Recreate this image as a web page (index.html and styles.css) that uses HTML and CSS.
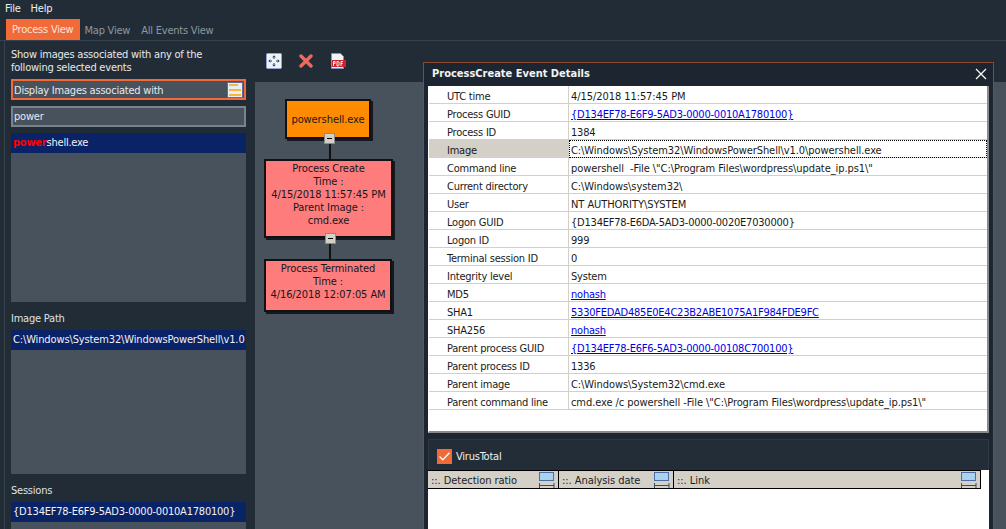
FILE: index.html
```html
<!DOCTYPE html>
<html lang="en">
<head>
<meta charset="utf-8">
<title>ProcessCreate Event Details</title>
<link rel="stylesheet" href="styles.css">
</head>
<body>
<div class="app">
  <nav class="menu"><span>File</span><span>Help</span></nav>
  <div class="tabs">
    <span class="tab active">Process View</span>
    <span class="tab map">Map View</span>
    <span class="tab">All Events View</span>
  </div>
  <main class="main">
    <aside class="side">
      <p class="intro">Show images associated with any of the<br>following selected events</p>
      <div class="select"><span>Display Images associated with</span>
        <svg class="select-icon" width="16" height="16" viewBox="0 0 16 16"><rect x=".5" y=".5" width="15" height="15" fill="#e8eef6" stroke="#5c6f9c"/><rect x="2" y="2" width="9" height="2" fill="#f6b93b"/><rect x="2" y="7" width="12" height="2" fill="#f6b93b"/><rect x="2" y="12" width="12" height="2" fill="#f6b93b"/></svg>
      </div>
      <div class="search">power</div>
      <div class="list first"><div class="row"><b class="hit">power</b>shell.exe</div></div>
      <h2 class="label">Image Path</h2>
      <div class="list second"><div class="row path-tight">C:\Windows\System32\WindowsPowerShell\v1.0</div></div>
      <h2 class="label">Sessions</h2>
      <div class="list third"><div class="row">{D134EF78-E6F9-5AD3-0000-0010A1780100}</div></div>
    </aside>
    <section class="work">
      <div class="toolbar">
        <svg width="16" height="16" viewBox="0 0 16 16"><rect x=".5" y=".5" width="15" height="15" rx="1" fill="#eef3fa" stroke="#8fa6cf"/><path d="M8 3v3M6.700 4.300 8 2.800l1.300 1.500M8 13v-3M6.700 11.700 8 13.200l1.300-1.500M3 8h3M4.300 6.700 2.800 8l1.500 1.300M13 8h-3M11.700 6.700 13.200 8l-1.500 1.300" fill="none" stroke="#2d3a55" stroke-width="1"/></svg>
        <svg width="14" height="14" viewBox="0 0 14 14"><path d="M2 2l10 10M12 2 2 12" stroke="#ee6a5f" stroke-width="3.400" stroke-linecap="round"/></svg>
        <svg width="16" height="16" viewBox="0 0 16 16"><path d="M1.500.5h9l3 3v12h-12z" fill="#eef3fa" stroke="#7f93bd"/><rect x="2" y="7" width="14" height="7" fill="#c9252b"/><path d="M3.500 13V8.500h1.600v2H3.500M7 13V8.500h1q1.200 0 1.200 2.200T8 13zM11 13V8.500h2M11 10.500h1.600" fill="none" stroke="#fff" stroke-width=".9"/></svg>
      </div>
      <div class="canvas">
        <div class="edge edge-a"></div>
        <div class="edge edge-b"></div>
        <div class="node orange n1">powershell.exe</div>
        <div class="toggle t1"></div>
        <div class="node pink n2">Process Create<br>Time :<br>4/15/2018 11:57:45 PM<br>Parent Image :<br>cmd.exe</div>
        <div class="toggle t2"></div>
        <div class="node pink n3">Process Terminated<br>Time :<br>4/16/2018 12:07:05 AM</div>
      </div>
    </section>
  </main>

  <section class="modal">
    <header class="modal-head">
      <h1>ProcessCreate Event Details</h1>
      <svg width="12" height="12" viewBox="0 0 12 12"><path d="M1 1l10 10M11 1 1 11" stroke="#fff" stroke-width="1.200"/></svg>
    </header>
    <div class="details">
      <div class="k">UTC time</div><div class="v loose">4/15/2018 11:57:45 PM</div>
      <div class="k">Process GUID</div><div class="v"><a>{D134EF78-E6F9-5AD3-0000-0010A1780100}</a></div>
      <div class="k">Process ID</div><div class="v">1384</div>
      <div class="k sel">Image</div><div class="v focus loose">C:\Windows\System32\WindowsPowerShell\v1.0\powershell.exe</div>
      <div class="k">Command line</div><div class="v loose">powershell &nbsp;-File \"C:\Program Files\wordpress\update_ip.ps1\"</div>
      <div class="k">Current directory</div><div class="v loose">C:\Windows\system32\</div>
      <div class="k">User</div><div class="v loose">NT AUTHORITY\SYSTEM</div>
      <div class="k">Logon GUID</div><div class="v"><span>{D134EF78-E6DA-5AD3-0000-0020E7030000}</span></div>
      <div class="k">Logon ID</div><div class="v">999</div>
      <div class="k">Terminal session ID</div><div class="v">0</div>
      <div class="k">Integrity level</div><div class="v">System</div>
      <div class="k">MD5</div><div class="v"><a>nohash</a></div>
      <div class="k">SHA1</div><div class="v"><a>5330FEDAD485E0E4C23B2ABE1075A1F984FDE9FC</a></div>
      <div class="k">SHA256</div><div class="v"><a>nohash</a></div>
      <div class="k">Parent process GUID</div><div class="v"><a>{D134EF78-E6F6-5AD3-0000-00108C700100}</a></div>
      <div class="k">Parent process ID</div><div class="v">1336</div>
      <div class="k">Parent image</div><div class="v loose">C:\Windows\System32\cmd.exe</div>
      <div class="k">Parent command line</div><div class="v loose">cmd.exe /c powershell -File \"C:\Program Files\wordpress\update_ip.ps1\"</div>
    </div>
    <div class="vt">
      <div class="vt-head">
        <svg width="15" height="15" viewBox="0 0 15 15"><rect width="15" height="15" fill="#f26a38"/><path d="M2.500 7.500l3.300 3.300L12.500 3.800" fill="none" stroke="#fff" stroke-width="1.300"/></svg>
        <span>VirusTotal</span>
      </div>
      <div class="vt-table">
        <div class="cols">
          <div class="col c1">::. Detection ratio<svg class="fit" width="16" height="16" viewBox="0 0 16 16"><use href="#fit"/></svg></div>
          <div class="col c2">::. Analysis date<svg class="fit" width="16" height="16" viewBox="0 0 16 16"><use href="#fit"/></svg></div>
          <div class="col c3">::. Link<svg class="fit" width="16" height="16" viewBox="0 0 16 16"><use href="#fit"/></svg></div>
        </div>
      </div>
    </div>
  </section>
  <svg class="defs" width="0" height="0"><defs><g id="fit"><rect x=".5" y=".5" width="14" height="8" fill="#a9d2f0" stroke="#4a6fa5"/><path d="M.5 11v5M15 11v5M1 13.500h14" fill="none" stroke="#3d4a68"/></g></defs></svg>
</div>
</body>
</html>
```

FILE: styles.css
```css
* { box-sizing: border-box; }
html, body { margin: 0; height: 100%; overflow: hidden; }
body { background: #222c36; color: #e6e9ec; font: 11px/14px "DejaVu Sans Condensed", "Liberation Sans", sans-serif; letter-spacing: -0.22px; }
.app { position: relative; width: 1006px; height: 529px; overflow: hidden; }
.defs { position: absolute; }

.menu { display: flex; gap: 10px; height: 19px; padding: 2px 0 0 5px; color: #eef0f2; }
.tabs { display: flex; height: 22px; padding-left: 6px; border-bottom: 1px solid #36424d; }
.tab { padding: 5px 5px 0 5px; color: #8f989f; }
.tab.map { padding: 5px 6px 0 4px; }
.tab.active { background: #f26a38; color: #f3e6df; padding: 4px 7px 0 6px; height: 21px; }

.main { display: flex; height: 488px; }
.side { width: 251px; padding: 7px 9px 0 6px; margin-left: 4px; border-left: 1px solid #36424d; flex: none; }
.intro { margin: 0 0 4px; line-height: 13px; height: 27px; }
.select { display: flex; align-items: center; justify-content: space-between; height: 21px; padding: 0 1px; border: 2px solid #f26a38; background: #47525c; }
.select span { position: relative; top: 1px; }
.select-icon { flex: none; }
.search { height: 21px; margin-top: 6px; padding: 2px 0 0 1px; border: 2px solid #79838c; background: #47525c; }
.list { background: #47525c; }
.first { height: 169px; margin-top: 6px; }
.second { height: 144px; }
.third { height: 40px; }
.row { height: 20px; padding: 3px 0 0 2px; background: #0a2266; color: #f0f2f6; white-space: nowrap; overflow: hidden; }
.path-tight { letter-spacing: -0.13px; }
.hit { color: #f00; }
.label { margin: 9px 0 5px; height: 14px; padding-top: 1px; font: inherit; color: #dfe3e6; }

.work { flex: 1; display: flex; flex-direction: column; }
.toolbar { display: flex; align-items: center; gap: 17px; height: 41px; padding: 0 0 2px 11px; }
.canvas { position: relative; flex: 1; background: #47525c; }

.node { position: absolute; display: flex; align-items: center; justify-content: center; text-align: center; color: #14181c; border: 2px solid #101214; box-shadow: 2px 2px 0 #15191d; line-height: 13px; letter-spacing: -0.08px; }
.orange { left: 30px; top: 17px; width: 86px; height: 40px; background: #ff8c00; }
.pink { background: #ff7c7c; padding-bottom: 8px; }
.n2 { left: 9px; top: 77px; width: 129px; height: 79px; }
.n3 { left: 9px; top: 177px; width: 128px; height: 53px; }
.toggle { position: absolute; width: 11px; height: 11px; background: #d4d0c8; border: 1px solid #8b8b8b; z-index: 1; }
.toggle::after { content: ""; position: absolute; left: 2px; top: 4px; width: 5px; height: 1px; background: #000; }
.t1 { left: 69px; top: 51px; }
.t2 { left: 70px; top: 151px; }
.edge { position: absolute; width: 2px; background: #111; }
.edge-a { left: 74px; top: 58px; height: 20px; }
.edge-b { left: 74px; top: 158px; height: 20px; }

.modal { position: absolute; left: 423px; top: 62px; width: 571px; height: 467px; padding: 0 4px; border: 1px solid #8d4630; border-bottom: 0; background: #1d2630; }
.modal-head { display: flex; align-items: center; justify-content: space-between; height: 23px; padding: 0 2px 2px 4px; }
.modal-head h1 { margin: 0; font: bold 11px/14px "DejaVu Sans Condensed", "Liberation Sans", sans-serif; letter-spacing: 0; color: #f1f3f5; }
.details { display: grid; grid-template-columns: 140px 1fr; grid-auto-rows: 18px; width: 561px; height: 347px; background: #fff; border-right: 2px solid #8a8a8a; border-bottom: 2px solid #8a8a8a; border-left: 1px solid #fff; color: #1a1a1a; }
.k, .v { padding-top: 4px; line-height: 13px; border-bottom: 1px solid #d4d0c8; white-space: nowrap; }
.k { padding-left: 18px; border-right: 1px solid #d4d0c8; }
.v { padding-left: 2px; }
.v.loose { letter-spacing: -0.07px; }
.k.sel { background: #d4d0c8; }
.v.focus { outline: 1px dotted #000; outline-offset: -1px; }
a { color: #0000e6; text-decoration: underline; }
.vt { margin-top: 6px; height: 90px; background: #232d37; border: 1px solid #2d3843; border-bottom: 0; }
.vt-head { display: flex; align-items: center; gap: 4px; height: 31px; padding: 2px 0 0 8px; color: #eef0f2; }
.vt-table { background: #fff; height: 59px; width: 561px; margin-left: -1px; margin-top: -1px; }
.cols { display: flex; height: 19px; width: 553px; background: #d4d0c8; border: 1px solid #000; border-width: 1px 1px 1px 0; color: #1c1c1c; letter-spacing: -0.05px; }
.col { position: relative; padding: 3px 0 0 3px; line-height: 13px; border-right: 1px solid #000; white-space: nowrap; }
.c1 { width: 131px; }
.c2 { width: 115px; }
.c3 { flex: 1; border-right: 0; }
.fit { position: absolute; right: 3px; top: 1px; }
```
